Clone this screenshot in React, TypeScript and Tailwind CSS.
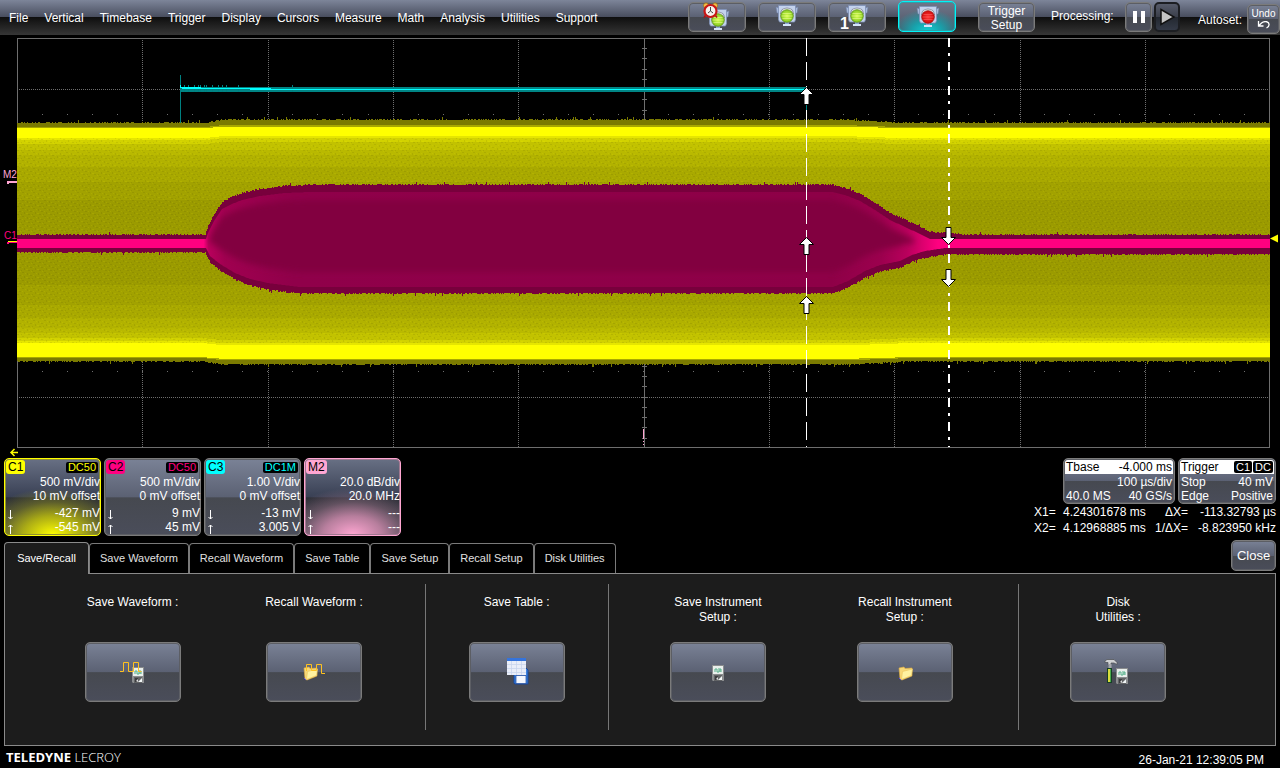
import type { ReactNode } from "react";

/* ---------- shared styles ---------- */

const gloss =
  "bg-[linear-gradient(#7a8296_0%,#5b6173_50%,#464950_51%,#4a4d5a_100%)]";
const frame =
  "border border-[#7b7b7b] rounded-[5px] p-px shadow-[inset_0_0_0_1px_#5c5e64]";

/* ---------- waveform geometry ---------- */

type Point = [number, number];

const LEFT = 17;
const RIGHT = 1270;

function noise(seed: number) {
  let s = seed;
  return () => {
    s = (s * 1664525 + 1013904223) % 4294967296;
    return s / 4294967296;
  };
}

function at(points: Point[], x: number) {
  for (let i = 1; i < points.length; i++) {
    const [x0, y0] = points[i - 1];
    const [x1, y1] = points[i];
    if (x <= x1) return y0 + ((y1 - y0) * (x - x0)) / (x1 - x0);
  }
  return points[points.length - 1][1];
}

const swell: Point[] = [
  [LEFT, 0],
  [204, 0],
  [222, 1],
  [850, 1],
  [905, 0],
  [RIGHT, 0],
];

const burstTop: Point[] = [
  [LEFT, 235], [205, 235], [208, 226], [214, 214], [222, 202], [232, 197], [242, 193],
  [260, 189], [285, 186], [310, 185], [833, 185], [845, 188], [860, 194], [875, 203],
  [890, 213], [905, 220], [920, 227], [930, 232], [948, 233], [965, 235], [RIGHT, 235],
];
const burstBottom: Point[] = [
  [LEFT, 252], [205, 252], [210, 262], [220, 270], [235, 279], [250, 285], [268, 289],
  [300, 293], [833, 293], [848, 287], [865, 277], [880, 271], [900, 267], [912, 261],
  [925, 257], [945, 254], [RIGHT, 254],
];

function band(
  top: (x: number) => number,
  bottom: (x: number) => number,
  step: number,
  rough: number,
  seed: number,
  from = LEFT,
  to = RIGHT
) {
  const rnd = noise(seed);
  const jitter = () => {
    const r = rnd();
    return rough === 0 ? 0 : r > 0.985 ? rough + 2 : r > 0.6 ? rough : 0;
  };
  let d = "";
  for (let x = from; x <= to; x += step) {
    const y = Math.round((top(x) - jitter()) * 2) / 2;
    d += x === from ? `M${x} ${y}` : rough ? `H${x}V${y}` : `L${x} ${y}`;
  }
  for (let x = to; x >= from; x -= step) {
    const y = Math.round((bottom(x) + jitter()) * 2) / 2;
    d += rough ? `V${y}H${x}` : `L${x} ${y}`;
  }
  return d + "Z";
}

const yellowLevels: [number, number, number, string][] = [
  [123, 361, 3, "#7b7b00"],
  [127, 358, 2, "#a8a800"],
  [128, 357, 1.5, "#ffff00"],
  [138, 343, 2, "#e6e600"],
  [140, 341, 2, "#d2d200"],
  [144, 338, 2, "#c2c200"],
  [150, 333, 0, "#b9b900"],
  [155, 328, 0, "#b2b200"],
  [167, 318, 0, "#a9a900"],
  [182, 305, 0, "#a2a200"],
  [200, 285, 0, "#9b9b00"],
];

const yellowPaths = yellowLevels.map(([t, b, s, color], i) => ({
  color,
  d: band(
    (x) => t - s * at(swell, x),
    (x) => b + s * at(swell, x),
    1,
    i === 0 ? 1 : 0,
    11 + i
  ),
}));

const MID = 243.5;
const burst = band((x) => at(burstTop, x), (x) => at(burstBottom, x), 1, 1, 77);
const burstInner = band(
  (x) => Math.min(MID - 4.5, at(burstTop, x) + 7),
  (x) => Math.max(MID + 4.5, at(burstBottom, x) - 6),
  1,
  0,
  1
);
const burstCore = band(
  (x) => Math.min(MID, at(burstTop, x) + 15),
  (x) => Math.max(MID, at(burstBottom, x) - 21),
  1,
  0,
  1,
  210,
  914
);

const cyanTicks = (() => {
  const rnd = noise(5);
  let d = "";
  for (let x = 184; x < 330; x += 2) {
    if (rnd() < (x < 242 ? 0.45 : 0.06)) d += `M${x} 85h1v7h-1z`;
  }
  return d;
})();

const columns = [142, 268, 393, 518, 769, 894, 1020, 1145];

function CursorArrow({ x, y, down = false }: { x: number; y: number; down?: boolean }) {
  return (
    <path
      transform={`translate(${x} ${y})${down ? " rotate(180)" : ""}`}
      d="M0-8.500L7-1.500H2.500V8.500H-2.500V-1.500H-7Z"
      fill="#fff"
      stroke="#000"
    />
  );
}

function Plot() {
  return (
    <svg viewBox="0 35 1280 423" className="block h-auto w-full" role="img" aria-label="Waveform display">
      <defs>
        <pattern id="grain" width="11" height="8" patternUnits="userSpaceOnUse">
          <path
            d="M0 0h2v1h-2zM5 1h1v2h-1zM8 3h2v1h-2zM2 4h1v2h-1zM6 6h2v1h-2zM10 6h1v1h-1z"
            fill="#000"
            opacity=".07"
          />
          <path d="M3 1h1v1h-1zM7 2h1v1h-1zM0 3h1v1h-1zM4 5h2v1h-2zM9 7h1v1h-1z" fill="#ff0" opacity=".1" />
        </pattern>
        <linearGradient id="burst" gradientUnits="userSpaceOnUse" x1="17" x2="1270" y1="0" y2="0">
          <stop offset="0.149" stopColor="#ff0080" />
          <stop offset="0.153" stopColor="#b8005c" />
          <stop offset="0.166" stopColor="#a00050" />
          <stop offset="0.22" stopColor="#90004a" />
          <stop offset="0.65" stopColor="#8e0047" />
          <stop offset="0.69" stopColor="#9c004e" />
          <stop offset="0.71" stopColor="#b8005c" />
          <stop offset="0.735" stopColor="#ff0080" />
        </linearGradient>
        <filter id="soft" x="-5%" y="-10%" width="110%" height="120%">
          <feGaussianBlur stdDeviation="3" />
        </filter>
        <clipPath id="frame">
          <rect x="17" y="38" width="1253" height="410" />
        </clipPath>
      </defs>

      <g stroke="#6e6e6e" shapeRendering="crispEdges" fill="none">
        <rect x="17.500" y="38.500" width="1252" height="409" />
        <path d="M17 89.500H1270M17 397.500H1270" strokeDasharray="1 1" />
        {columns.map((x) => (
          <path key={x} d={`M${x + 0.5} 40V447`} strokeDasharray="1 1" />
        ))}
        <path d="M644.500 38V447" />
        <path d="M644.500 48V446" strokeWidth="5" strokeDasharray="1 9.250" />
        <path d="M42 114.500H1270M42 371.500H1270" strokeDasharray="1 24.040" />
        <path d="M643.500 429v10" stroke="#ffa6d2" />
        <path d="M643.500 441v6" stroke="#ffa6d2" strokeDasharray="1 2" />
      </g>

      <g clipPath="url(#frame)">
        {yellowPaths.map((p) => (
          <path key={p.color} d={p.d} fill={p.color} shapeRendering="crispEdges" />
        ))}
        <rect x="17" y="138" width="1253" height="206" fill="url(#grain)" />
        <path d={burst} fill="#78003c" shapeRendering="crispEdges" />
        <path d={burstInner} fill="url(#burst)" />
        <path d={burstCore} fill="#820040" filter="url(#soft)" />

        <g shapeRendering="crispEdges">
          <path d="M181 87H806v5H181z" fill="#008484" />
          <path d={cyanTicks} fill="#008080" />
          <path d="M180 75h1v48h-1zM806 92h1v30h-1z" fill="#008080" />
          <path d="M180 85h1v2h20v1h70v1H806V90H250v-1H182v-1h-2z" fill="#0ff" />
        </g>
      </g>

      <path d="M806.500 38V447" stroke="#fff" strokeDasharray="18 6" shapeRendering="crispEdges" />
      <path d="M949 38V447" stroke="#fff" strokeWidth="2" strokeDasharray="9 6 3 6" shapeRendering="crispEdges" />
      <CursorArrow x={806.5} y={96} />
      <CursorArrow x={806.5} y={246} />
      <CursorArrow x={806.5} y={305} />
      <CursorArrow x={948.5} y={236} down />
      <CursorArrow x={948.5} y={278} down />

      <g fontFamily="'Liberation Sans', sans-serif" fontSize="10">
        <text x="3" y="178" fill="#ffa6d2">M2</text>
        <text x="4" y="239" fill="#ff0080">C1</text>
      </g>
      <g shapeRendering="crispEdges">
        <path d="M7 181h10v2h-8v1h-2z" fill="#ffa6d2" />
        <path d="M7 242h10v1h-8v1h-2z" fill="#ff0080" />
        <path d="M8 241h9v1H8z" fill="#ff0" />
      </g>
      <path d="M1270 238.500l8-4v8z" fill="#ff0" />
      <path d="M11 452.500H18M14.500 449l-3.500 3.500L14.500 456" stroke="#ff0" strokeWidth="1.500" fill="none" />
    </svg>
  );
}

/* ---------- icons ---------- */

function Lamp({ x, y, red = false }: { x: number; y: number; red?: boolean }) {
  const id = red ? "lampRed" : "lampGreen";
  return (
    <g transform={`translate(${x} ${y})`}>
      <path d="M0 2l3 1v5H1zM22 2l-3 1v5h2z" fill="#a9bad9" stroke="#6c7ea6" strokeWidth=".5" />
      <path d="M2.500.5h17v14l-1 2.500h-15l-1-2.500z" fill="#c4d2ec" stroke="#7d90b8" strokeWidth=".8" />
      <path d="M9 17h4v2H9z" fill="#8ba3d3" />
      <path d="M7 19h8v2H7z" fill="#d5e3fa" />
      <path d="M4.500 9C5 1 17 1 17.500 9" fill="#eef1f6" stroke="#8a90a0" strokeWidth="1.200" />
      <circle cx="11" cy="11" r="6.300" fill={`url(#${id})`} stroke={red ? "#a01414" : "#5c8c18"} strokeWidth=".8" />
      <path
        d="M6.500 8.500h9M5.500 11h11M6.500 13.500h9"
        stroke={red ? "#ff6a6a" : "#efff9a"}
        strokeWidth=".9"
        opacity=".6"
      />
      <defs>
        <radialGradient id={id} cx=".5" cy=".5" r=".6">
          <stop offset="0" stopColor={red ? "#ff3a3a" : "#d8ff50"} />
          <stop offset="1" stopColor={red ? "#c80000" : "#72bd18"} />
        </radialGradient>
      </defs>
    </g>
  );
}

function LightIcon({ kind }: { kind: "auto" | "normal" | "single" | "stop" }) {
  return (
    <svg width="54" height="26" viewBox="0 0 54 26" className="block overflow-visible" aria-hidden="true">
      {kind === "auto" && (
        <>
          <Lamp x={17} y={5} />
          <circle cx="16" cy="1.500" r="2.500" fill="#f0bd4a" stroke="#9a6a10" strokeWidth=".7" />
          <circle cx="25" cy="1.500" r="2.500" fill="#f0bd4a" stroke="#9a6a10" strokeWidth=".7" />
          <path d="M15.500 11.500l-1.500 2M25.500 11.500l1.500 2" stroke="#b31010" strokeWidth="1.500" />
          <circle cx="20.500" cy="7" r="6" fill="#f7f2ee" stroke="#c81616" strokeWidth="2.200" />
          <path d="M20.500 3v4l-2.500 2M20.500 7l2.500 2" stroke="#333" fill="none" strokeWidth=".9" />
        </>
      )}
      {kind === "normal" && <Lamp x={16} y={1} />}
      {kind === "single" && (
        <>
          <Lamp x={16} y={1} />
          <text x="10" y="25" fill="#fff" fontSize="16" fontWeight="700" fontFamily="'Liberation Sans', sans-serif">
            1
          </text>
        </>
      )}
      {kind === "stop" && <Lamp x={17} y={2} red />}
    </svg>
  );
}

function Floppy({ x, y }: { x: number; y: number }) {
  return (
    <g transform={`translate(${x} ${y})`}>
      <path d="M0 0h12v16H1L0 15z" fill="#8b8d8f" />
      <path d="M1 1h10v8H1z" fill="#e9efec" />
      <path d="M3 7V4h2v3h2V3M8 7V4h1v3" stroke="#56b08b" fill="none" />
      <path d="M2 10h8v6H2z" fill="#626466" />
      <path d="M3 11h3v4H3z" fill="#3c3d40" />
      <path d="M6 15l4-4v4z" fill="#f2f6f7" />
      <path d="M4 14l2-2v3z" fill="#ddd" />
    </g>
  );
}

function Folder({ x, y }: { x: number; y: number }) {
  return (
    <g transform={`translate(${x} ${y})`}>
      <path d="M1 2l5-1 1 1.500 7-.5v8l-10 4-2-1z" fill="#f8d877" stroke="#e0ad40" strokeWidth=".6" />
      <path d="M4.500 5.500L14.500 3l-1 6.500L3.500 13.500z" fill="#fff2a0" stroke="#ecc65c" strokeWidth=".6" />
      <path d="M1 12l2 2" stroke="#5d4de0" />
    </g>
  );
}

type IconName = "saveWave" | "recallWave" | "table" | "floppy" | "folder" | "tools";

function ActionIcon({ name }: { name: IconName }) {
  return (
    <svg width="32" height="28" viewBox="0 0 32 28" aria-hidden="true">
      {name === "saveWave" && (
        <>
          <Floppy x={15} y={9} />
          <path d="M3 13.500h3.500V4.500h5v9h5V4.500h5v9h3" stroke="#ffc21f" fill="none" />
        </>
      )}
      {name === "recallWave" && (
        <>
          <Folder x={5} y={8} />
          <path d="M8.500 13V6.500h5v6h5V6.500h5v9h3.500" stroke="#ffc21f" fill="none" />
        </>
      )}
      {name === "table" && (
        <>
          <path d="M13 10h12l2 2v14H14l-1-1z" fill="#3b82e0" stroke="#17469c" />
          <path d="M15 17.500h10v8H15z" fill="#f4f8ff" stroke="#1c479c" strokeWidth=".7" />
          <path d="M6 0h19v17H6z" fill="#e9eef9" />
          <path d="M6 0h19v3H6z" fill="#3574dc" />
          <path d="M6 6.500h19M6 10.500h19M6 14.500h19M10.500 3v14M15.500 3v14M20.500 3v14" stroke="#c6d2ec" strokeWidth=".7" />
        </>
      )}
      {name === "floppy" && <Floppy x={10} y={7} />}
      {name === "folder" && <Folder x={9} y={8} />}
      {name === "tools" && (
        <>
          <path d="M3 3l2-1.500h7l3 3v2l-3-1.500H9v2H6V4.500H3z" fill="#d0d2d4" stroke="#4b4d50" strokeWidth=".7" />
          <path d="M6.500 6h3v5h-3z" fill="#a5a8ac" />
          <path d="M5 10h5v15H5z" fill="#163f25" />
          <path d="M6 11h2v13H6z" fill="#d8dc3c" />
          <path d="M8 11h1v13H8z" fill="#49aa4c" />
          <Floppy x={14} y={10} />
        </>
      )}
    </svg>
  );
}

/* ---------- header ---------- */

const menus = [
  "File", "Vertical", "Timebase", "Trigger", "Display", "Cursors",
  "Measure", "Math", "Analysis", "Utilities", "Support",
];

function Header() {
  return (
    <header className="flex h-[35px] items-start justify-between bg-[linear-gradient(#7d8599_0px,#484d5e_17px,#0e0e0e_17px,#363636_35px)]">
      <nav className="flex gap-4 pt-2.5 pl-[9px] leading-4">
        {menus.map((m) => (
          <button key={m} type="button" className="text-left">
            {m}
          </button>
        ))}
      </nav>
      <div className="flex items-start pt-0.5">
        <div className="flex gap-3">
          {(["auto", "normal", "single"] as const).map((k) => (
            <button
              key={k}
              type="button"
              aria-label={`${k} trigger`}
              className={`h-[30px] w-[58px] ${gloss} ${frame}`}
            >
              <LightIcon kind={k} />
            </button>
          ))}
          <button
            type="button"
            aria-label="stop trigger"
            className="-mt-px h-[31px] w-[58px] rounded-[5px] border border-[#00f4f8] p-px shadow-[inset_0_0_0_1px_#2f9fa8] bg-[radial-gradient(ellipse_60%_75%_at_bottom,#12ccd2_0%,#199fa9_45%,transparent_100%),linear-gradient(#6f778a,#4d5364)]"
          >
            <LightIcon kind="stop" />
          </button>
        </div>
        <button
          type="button"
          className={`ml-[22px] h-[30px] w-[57px] leading-[14px] ${gloss} ${frame}`}
        >
          Trigger
          <br />
          Setup
        </button>
        <span className="ml-4 w-[74px] pt-1.5 leading-4">Processing:</span>
        <button
          type="button"
          aria-label="Pause"
          className={`flex h-[30px] w-[27px] items-center justify-center gap-1 ${gloss} ${frame}`}
        >
          <span className="h-3 w-1 bg-white" />
          <span className="h-3 w-1 bg-white" />
        </button>
        <button
          type="button"
          aria-label="Run"
          className="ml-0.5 flex h-[30px] w-[26px] items-center justify-center rounded-[5px] border-2 border-[#1c1e22] bg-[linear-gradient(#565b6a,#3a3e49_50%,#232830_51%,#343a47)]"
        >
          <svg width="18" height="18" viewBox="0 0 18 18" aria-hidden="true">
            <path d="M3 1.500L16 9L3 16.500z" fill="#c4c4c4" stroke="#111" strokeWidth="1.500" />
          </svg>
        </button>
        <span className="ml-[18px] w-[49px] pt-2.5 leading-4">Autoset:</span>
        <button
          type="button"
          className={`mt-0.5 flex h-[30px] w-[33px] flex-col items-center text-[10px] leading-[15px] ${gloss} ${frame}`}
        >
          Undo
          <svg width="14" height="8" viewBox="0 0 14 8" aria-hidden="true">
            <path d="M1.500 0v5H6.500M2 4.500L4.500 2C8-.5 12.500.5 12 4c0 1.500-1.500 2.500-2.500 3" stroke="#fff" fill="none" strokeWidth="1.300" />
          </svg>
        </button>
      </div>
    </header>
  );
}

/* ---------- channel descriptors ---------- */

interface Channel {
  name: string;
  coupling?: string;
  tag: string;
  couplingColor: string;
  box: string;
  lines: [string, string];
  down: string;
  up: string;
}

const channels: Channel[] = [
  {
    name: "C1",
    coupling: "DC50",
    tag: "bg-[#ffff00]",
    couplingColor: "text-[#ffff00]",
    box: "border-[#ffff00] shadow-[inset_0_0_0_1px_#8f8f30] bg-[radial-gradient(ellipse_78%_62%_at_bottom,#ffff00_0%,#c8c80acc_40%,#8a8a2080_70%,transparent_100%),linear-gradient(#687084,#394054_50%,#2b2e36_51%,#3a3d48)]",
    lines: ["500 mV/div", "10 mV offset"],
    down: "-427 mV",
    up: "-545 mV",
  },
  {
    name: "C2",
    coupling: "DC50",
    tag: "bg-[#ff0080]",
    couplingColor: "text-[#ff0080]",
    box: `border-[#7b7b7b] shadow-[inset_0_0_0_1px_#5c5e64] ${gloss}`,
    lines: ["500 mV/div", "0 mV offset"],
    down: "9 mV",
    up: "45 mV",
  },
  {
    name: "C3",
    coupling: "DC1M",
    tag: "bg-[#00ffff]",
    couplingColor: "text-[#00ffff]",
    box: `border-[#7b7b7b] shadow-[inset_0_0_0_1px_#5c5e64] ${gloss}`,
    lines: ["1.00 V/div", "0 mV offset"],
    down: "-13 mV",
    up: "3.005 V",
  },
  {
    name: "M2",
    tag: "bg-[#ffa6d2]",
    couplingColor: "",
    box: "border-[#ffa6d2] shadow-[inset_0_0_0_1px_#a07890] bg-[radial-gradient(ellipse_78%_62%_at_bottom,#ffa6d2_0%,#d890b4cc_40%,#94708480_70%,transparent_100%),linear-gradient(#687084,#394054_50%,#2b2e36_51%,#3a3d48)]",
    lines: ["20.0 dB/div", "20.0 MHz"],
    down: "---",
    up: "---",
  },
];

function LevelArrow({ up = false }: { up?: boolean }) {
  return (
    <svg width="6" height="10" viewBox="0 0 6 10" aria-hidden="true">
      <path
        d={up ? "M2.500 10V1M.5 3l2-2 2 2" : "M2.500 0v9M.5 7l2 2 2-2"}
        stroke="#fff"
        fill="none"
      />
    </svg>
  );
}

function ChannelBox({ c }: { c: Channel }) {
  return (
    <button
      type="button"
      className={`flex h-[78px] w-[97px] flex-col rounded-[5px] border py-px pl-px text-right leading-[14px] ${c.box}`}
    >
      <span className="flex h-[17px] w-full items-start justify-between">
        <span className={`rounded-[3px] px-0.5 leading-[14px] text-black ${c.tag}`}>{c.name}</span>
        {c.coupling && (
          <span className={`mt-0.5 mr-0.5 rounded-[2px] bg-black px-0.5 text-[11px] leading-[11px] ${c.couplingColor}`}>
            {c.coupling}
          </span>
        )}
      </span>
      <span className="w-full">{c.lines[0]}</span>
      <span className="w-full">{c.lines[1]}</span>
      <span className="mt-[3px] flex w-full items-end justify-between pl-0.5">
        <LevelArrow />
        {c.down}
      </span>
      <span className="flex w-full items-end justify-between pl-0.5">
        <LevelArrow up />
        {c.up}
      </span>
    </button>
  );
}

function Row({ left, right }: { left: ReactNode; right: ReactNode }) {
  return (
    <span className="flex justify-between px-px">
      <span>{left}</span>
      <span>{right}</span>
    </span>
  );
}

function Readouts() {
  return (
    <div className="pr-1">
      <div className="flex justify-end gap-[3px] leading-[14px]">
        <button type="button" className={`h-[46px] w-[112px] text-left ${gloss} ${frame}`}>
          <span className="block rounded-t-[3px] bg-white text-black">
            <Row left="Tbase" right="-4.000 ms" />
          </span>
          <span className="mt-px block">
            <Row left="" right="100 µs/div" />
            <Row left="40.0 MS" right="40 GS/s" />
          </span>
        </button>
        <button type="button" className={`h-[46px] w-[98px] text-left ${gloss} ${frame}`}>
          <span className="block rounded-t-[3px] bg-white text-black">
            <Row
              left="Trigger"
              right={
                <span className="flex gap-px pt-px text-[11px] leading-3 text-white">
                  <span className="rounded-[2px] bg-black px-0.5">C1</span>
                  <span className="rounded-[2px] bg-black px-0.5">DC</span>
                </span>
              }
            />
          </span>
          <span className="mt-px block">
            <Row left="Stop" right="40 mV" />
            <Row left="Edge" right="Positive" />
          </span>
        </button>
      </div>
      <dl className="grid grid-cols-[29px_88px_37px_88px] leading-4">
        <dt>X1=</dt>
        <dd>4.24301678 ms</dd>
        <dt className="text-right">ΔX=</dt>
        <dd className="text-right">-113.32793 µs</dd>
        <dt>X2=</dt>
        <dd>4.12968885 ms</dd>
        <dt className="text-right">1/ΔX=</dt>
        <dd className="text-right">-8.823950 kHz</dd>
      </dl>
    </div>
  );
}

/* ---------- dialog ---------- */

const tabs = [
  "Save Waveform", "Recall Waveform", "Save Table", "Save Setup", "Recall Setup", "Disk Utilities",
];

function Action({ label, icon }: { label: string[]; icon: IconName }) {
  const id = `action-${icon}`;
  return (
    <div className="flex flex-1 flex-col items-center text-center">
      <label htmlFor={id} className="h-[47px] leading-[15px]">
        {label.map((l) => (
          <span key={l} className="block">
            {l}
          </span>
        ))}
      </label>
      <button
        id={id}
        type="button"
        className={`flex h-[60px] w-24 items-center justify-center ${gloss} ${frame}`}
      >
        <ActionIcon name={icon} />
      </button>
    </div>
  );
}

function Dialog() {
  return (
    <section className="px-1 pt-[5px]">
      <div className="flex h-8 items-end justify-between">
        <div role="tablist" className="flex items-end text-[11px]">
          <button
            type="button"
            role="tab"
            aria-selected="true"
            className="relative z-10 -mb-px h-8 w-[85px] rounded-t-[4px] border border-b-0 border-[#8a8a8a] bg-[#1c1c1c]"
          >
            Save/Recall
          </button>
          {tabs.map((t) => (
            <button
              key={t}
              type="button"
              role="tab"
              aria-selected="false"
              className="h-[30px] rounded-t-[4px] border border-b-0 border-[#7a7a7a] bg-black px-2.5 text-[#e0e0e0]"
            >
              {t}
            </button>
          ))}
        </div>
        <button type="button" className={`mb-0.5 h-[31px] w-[45px] text-[13px] ${gloss} ${frame}`}>
          Close
        </button>
      </div>
      <div
        role="tabpanel"
        className="grid grid-cols-[421fr_183fr_411fr_256fr] border border-[#8a8a8a] bg-[#1c1c1c] pt-2.5 pb-[15px] *:h-[146px] *:pt-[11px]"
      >
        <div className="flex border-r border-[#777777] pr-5 pl-[37px]">
          <Action label={["Save Waveform :"]} icon="saveWave" />
          <Action label={["Recall Waveform :"]} icon="recallWave" />
        </div>
        <div className="flex border-r border-[#777777]">
          <Action label={["Save Table :"]} icon="table" />
        </div>
        <div className="flex border-r border-[#777777] pr-5 pl-4">
          <Action label={["Save Instrument", "Setup :"]} icon="floppy" />
          <Action label={["Recall Instrument", "Setup :"]} icon="folder" />
        </div>
        <div className="flex pr-[58px]">
          <Action label={["Disk", "Utilities :"]} icon="tools" />
        </div>
      </div>
    </section>
  );
}

export default function App() {
  return (
    <div className="min-h-screen bg-black font-['Liberation_Sans',Arial,sans-serif] text-[12px] text-white">
      <Header />
      <main>
        <Plot />
        <div className="flex items-start justify-between pl-1">
          <div className="flex gap-[3px]">
            {channels.map((c) => (
              <ChannelBox key={c.name} c={c} />
            ))}
          </div>
          <Readouts />
        </div>
        <Dialog />
      </main>
      <footer className="flex h-[22px] items-center justify-between pr-4 pl-1.5">
        <p className="font-['Open_Sans',sans-serif] text-[13px] leading-5 font-light">
          <strong className="font-bold">TELEDYNE</strong> LECROY
        </p>
        <time className="pt-1.5">26-Jan-21 12:39:05 PM</time>
      </footer>
    </div>
  );
}
